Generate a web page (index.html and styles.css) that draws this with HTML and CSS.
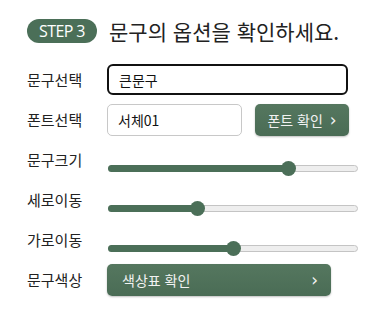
FILE: index.html
```html
<!DOCTYPE html>
<html lang="ko">
<head>
  <meta charset="UTF-8" />
  <title>문구 옵션</title>
  <link rel="stylesheet" href="styles.css">
</head>
<body>

<div class="panel">
  <div class="step-head">
    <span class="step-badge">STEP 3</span>
    <h2>문구의 옵션을 확인하세요.</h2>
  </div>

  <div class="opt-row">
    <label class="opt-label">문구선택</label>
    <input class="text-input active" type="text" value="큰문구">
  </div>

  <div class="opt-row">
    <label class="opt-label">폰트선택</label>
    <input class="text-input font-input" type="text" value="서체01">
    <button class="green-btn font-btn">폰트 확인 <span class="arrow">&rsaquo;</span></button>
  </div>

  <div class="opt-row">
    <label class="opt-label">문구크기</label>
    <div class="slider"><div class="fill" style="width: 180px"></div><div class="thumb" style="left: 180px"></div></div>
  </div>

  <div class="opt-row">
    <label class="opt-label">세로이동</label>
    <div class="slider"><div class="fill" style="width: 89px"></div><div class="thumb" style="left: 89px"></div></div>
  </div>

  <div class="opt-row">
    <label class="opt-label">가로이동</label>
    <div class="slider"><div class="fill" style="width: 125px"></div><div class="thumb" style="left: 125px"></div></div>
  </div>

  <div class="opt-row">
    <label class="opt-label">문구색상</label>
    <button class="green-btn color-btn"><span>색상표 확인</span><span class="arrow">&rsaquo;</span></button>
  </div>
</div>

</body>
</html>
```

FILE: styles.css
```css
body {
  margin: 0;
  background: #fff;
  font-family: "Noto Sans CJK KR", "Noto Sans", sans-serif;
  color: #222;
}

.panel {
  padding: 19px 0 0 27px;
}

.step-head {
  display: flex;
  align-items: center;
  gap: 12px;
  height: 24px;
  margin-bottom: 21px;
}

.step-badge {
  display: inline-flex;
  align-items: center;
  justify-content: center;
  width: 70px;
  height: 24px;
  border-radius: 12px;
  background: #4b6f58;
  color: #fff;
  font-family: "Open Sans", sans-serif;
  font-size: 16px;
  letter-spacing: -0.6px;
}

.step-head h2 {
  margin: 0;
  font-size: 21px;
  font-weight: normal;
  color: #222;
}

.opt-row {
  display: flex;
  align-items: flex-start;
  height: 32px;
  margin-bottom: 8px;
}

.opt-label {
  width: 80px;
  line-height: 32px;
  font-size: 15px;
  color: #222;
}

.text-input {
  box-sizing: border-box;
  height: 32px;
  padding: 0 10px;
  border: 1px solid #c8c8c8;
  border-radius: 5px;
  font-family: "Noto Sans CJK KR", sans-serif;
  font-size: 14px;
  color: #111;
  outline: none;
}

.text-input.active {
  width: 241px;
  height: 31px;
  border: 2px solid #111;
  border-radius: 6px;
}

.font-input {
  width: 135px;
}

.green-btn {
  box-sizing: border-box;
  height: 32px;
  border: none;
  border-radius: 5px;
  background: linear-gradient(#55775f, #4a6c55);
  box-shadow: 0 1px 2px rgba(0, 0, 0, 0.25);
  color: #f2f2f2;
  font-family: "Noto Sans CJK KR", sans-serif;
  font-size: 14px;
  cursor: pointer;
}

.font-btn {
  width: 94px;
  margin-left: 13px;
  padding: 0;
}

.color-btn {
  display: flex;
  align-items: center;
  justify-content: space-between;
  width: 224px;
  padding: 0 13px 0 15px;
}

.arrow {
  font-family: "DejaVu Sans", sans-serif;
  font-size: 17px;
  margin-left: 3px;
}

.slider {
  position: relative;
  box-sizing: border-box;
  width: 250px;
  height: 7px;
  margin: 21px 0 0 1px;
  border: 1px solid #c4c4c4;
  border-radius: 4px;
  background: #eee;
}

.fill {
  position: absolute;
  left: -1px;
  top: -1px;
  height: 7px;
  border-radius: 4px 0 0 4px;
  background: #4b6f58;
}

.thumb {
  position: absolute;
  top: -5px;
  width: 15px;
  height: 15px;
  margin-left: -8px;
  border-radius: 50%;
  background: #4b6f58;
}
```
